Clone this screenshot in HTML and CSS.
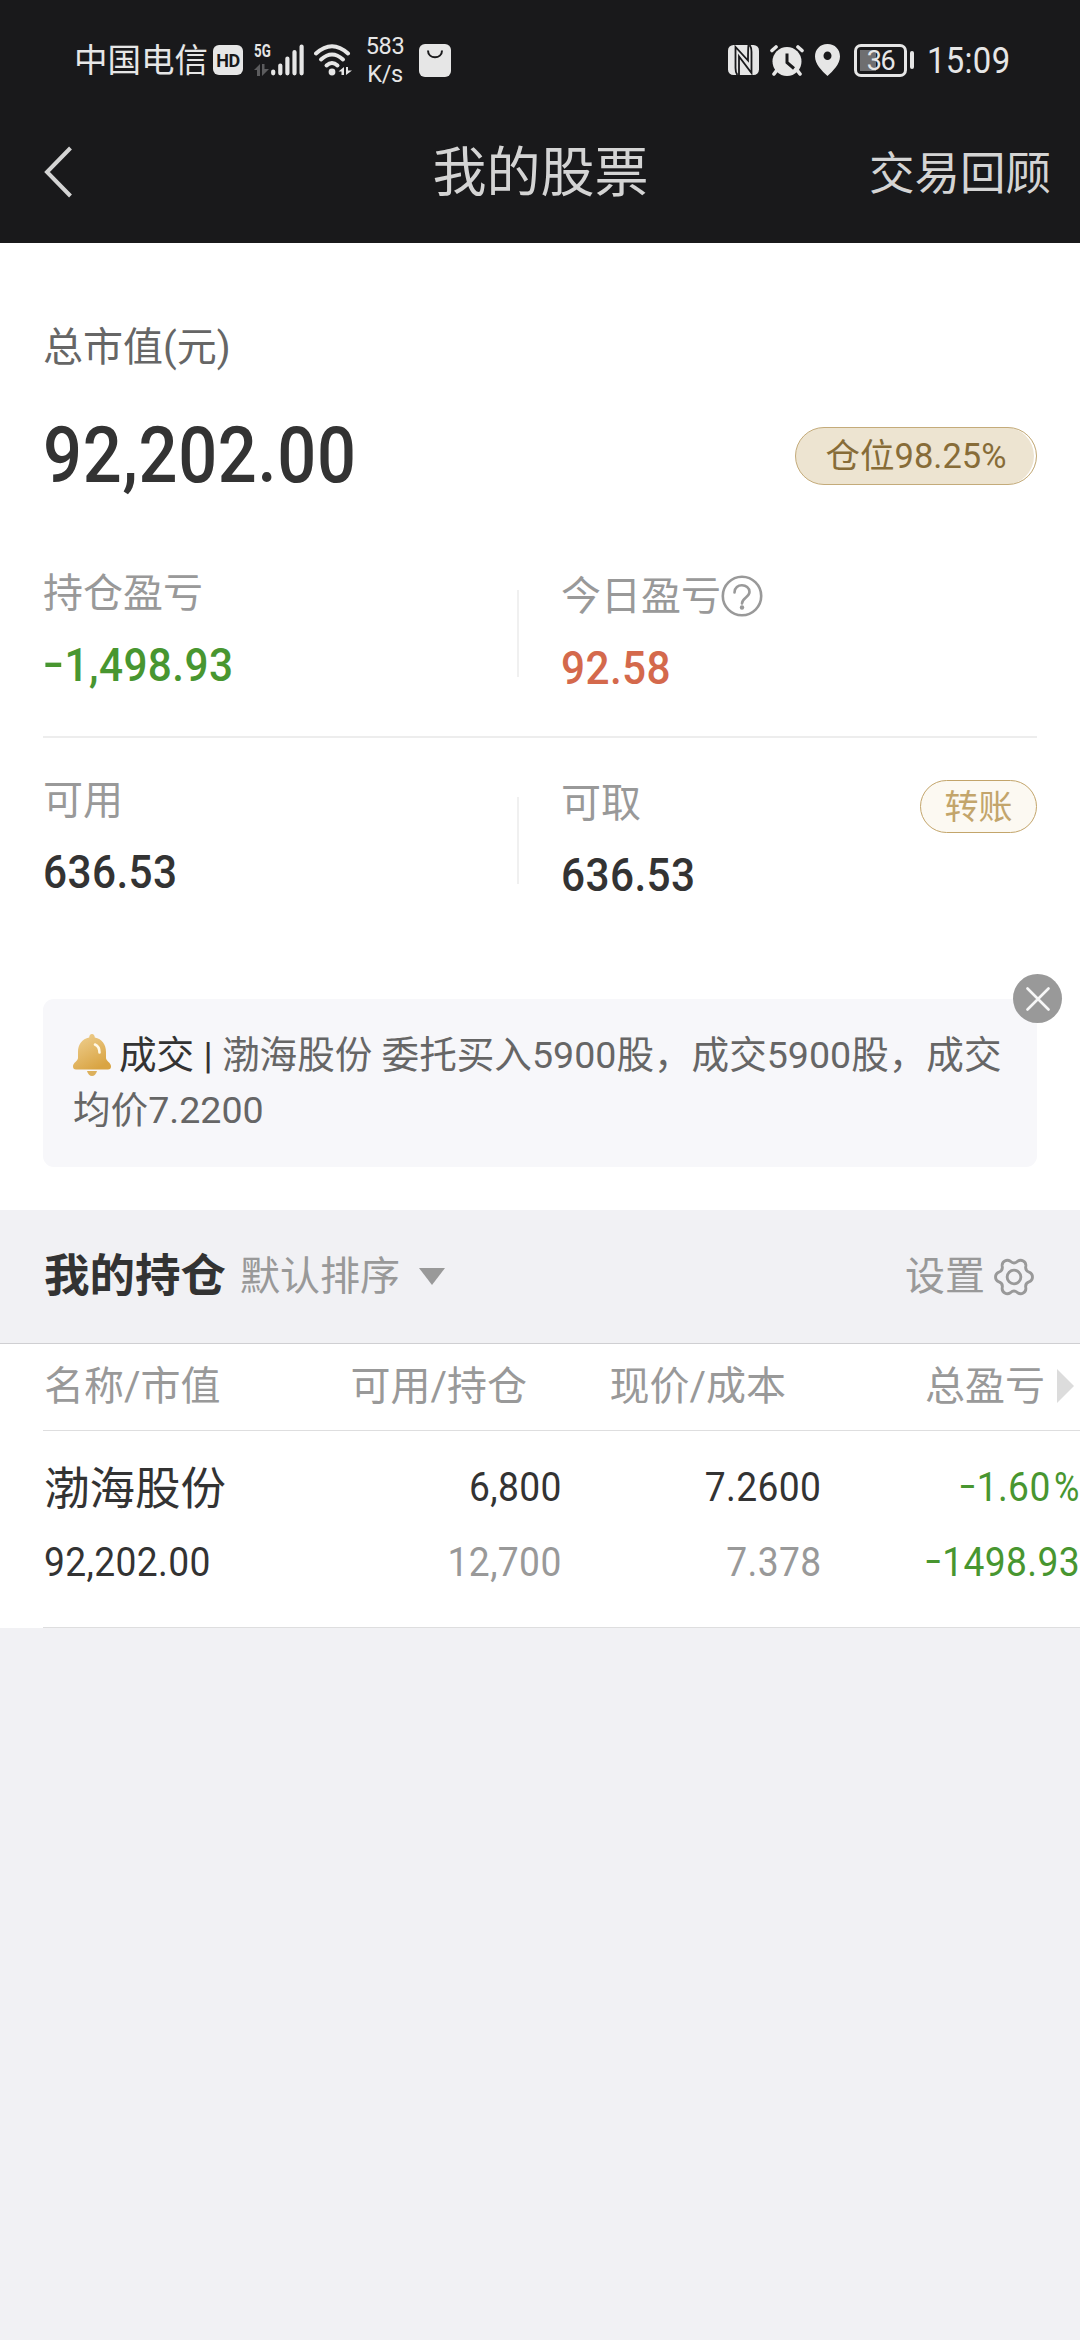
FILE: index.html
```html
<!DOCTYPE html>
<html lang="zh-CN">
<head>
    <meta charset="UTF-8">
    <meta name="viewport" content="width=device-width, initial-scale=1.0">
    <title>我的股票</title>
    <link rel="stylesheet" href="styles.css">
</head>
<body>
    <header class="header">
        <!-- Status bar -->
        <div class="status-bar">
            <div class="status-left">
                <span class="carrier">中国电信</span>
                <span class="hd">HD</span>
                <div class="network">
                    <span class="network-type">5G</span>
                    <svg width="15" height="12" viewBox="0 0 15 12" fill="#5c5c5e">
                        <path d="M6 0v12H3V6H0zM8 12V0h2.500v5H15z"/>
                    </svg>
                </div>
                <svg class="signal" width="33" height="32" viewBox="0 0 33 32" stroke="#e6e6e6" stroke-width="4.2" stroke-linecap="round">
                    <path d="M2.2 27.5v1.8M9.3 21.5v7.8M16.4 14.5v14.8M23.5 8v21.3M30.6 2.5v26.8"/>
                </svg>
                <svg class="wifi" width="38" height="32" viewBox="0 0 38 32">
                    <g fill="none" stroke="#e6e6e6" stroke-width="4" stroke-linecap="round">
                        <path d="M2 9.5Q18 -5 34 9.5"/>
                        <path d="M7 15.5Q18 5.5 29 15.5"/>
                        <path d="M12.5 21.5Q18 16.5 23.5 21.5"/>
                    </g>
                    <circle cx="18" cy="28" r="3.4" fill="#e6e6e6"/>
                    <path d="M30 23v8h-2.500v-3.500H24.500zM32 31v-8h2v3.500h4z" fill="#e6e6e6"/>
                </svg>
                <div class="speed">
                    <span>583</span>
                    <span>K/s</span>
                </div>
                <svg class="bag" width="32" height="33" viewBox="0 0 32 33">
                    <rect width="32" height="33" rx="6" fill="#e6e6e6"/>
                    <path d="M9 6.500c0 9 14 9 14 0" fill="none" stroke="#19191b" stroke-width="2"/>
                </svg>
            </div>
            <div class="status-right">
                <svg width="31" height="30" viewBox="0 0 31 30">
                    <rect width="31" height="30" rx="5.500" fill="#e6e6e6"/>
                    <path d="M9.500 30Q7.500 28 7.500 23V2L20 15.500Q20 3 20.500 0M11 30V11.500L23.500 28V7Q23.500 2 21.500 0" fill="none" stroke="#19191b" stroke-width="1.800"/>
                </svg>
                <svg width="34" height="31" viewBox="0 0 34 31">
                    <circle cx="17" cy="16.500" r="14.500" fill="#e6e6e6"/>
                    <path d="M2 5.500L6 2M32 5.500L28 2M7 25l-3 4M27 25l3 4" stroke="#e6e6e6" stroke-width="3.600" stroke-linecap="round"/>
                    <path d="M17 8.500v9l7 6" fill="none" stroke="#19191b" stroke-width="3"/>
                </svg>
                <svg width="25" height="32" viewBox="0 0 25 32">
                    <path d="M12.500 0C5 0 0 5.500 0 12.500 0 20 7 27 12.500 32 18 27 25 20 25 12.500 25 5.500 20 0 12.500 0zm0 7.500a4 4.300 0 1 1 0 8.600 4 4.300 0 0 1 0-8.600z" fill="#e6e6e6"/>
                </svg>
                <div class="battery">
                    <div class="battery-body"><span>36</span></div>
                    <div class="battery-cap"></div>
                </div>
                <div class="clock"><span class="num">15:09</span></div>
            </div>
        </div>
        <!-- Navigation -->
        <nav class="nav">
            <svg class="back" width="30" height="54" viewBox="0 0 30 54" fill="none" stroke="#d4d4d4" stroke-width="4">
                <path d="M27.500 3L4 27l23.500 24"/>
            </svg>
            <h1>我的股票</h1>
            <a class="review">交易回顾</a>
        </nav>
    </header>

    <!-- Account summary -->
    <section class="summary">
        <div class="total-label">总市值(元)</div>
        <div class="total-row">
            <span class="num total-value">92,202.00</span>
            <span class="position-badge">仓位98.25%</span>
        </div>

        <div class="stats-row">
            <div class="stat">
                <div class="stat-label">持仓盈亏</div>
                <div class="stat-value down"><span class="num"><span class="minus">-</span>1,498.93</span></div>
            </div>
            <div class="divider"></div>
            <div class="stat stat-second">
                <div class="stat-label">今日盈亏<svg width="42" height="42" viewBox="0 0 42 42" fill="none" stroke="#999" stroke-width="2.600">
                        <circle cx="21" cy="21" r="19.200"/>
                        <path d="M13.500 17.500c0-10 15-9 15-.500 0 5-7.500 6-7.500 11.500" stroke-linecap="round"/>
                        <circle cx="21" cy="32.500" r="2.200" fill="#999" stroke="none"/>
                    </svg></div>
                <div class="stat-value up"><span class="num">92.58</span></div>
            </div>
        </div>

        <div class="stats-row">
            <div class="stat">
                <div class="stat-label">可用</div>
                <div class="stat-value"><span class="num">636.53</span></div>
            </div>
            <div class="divider"></div>
            <div class="stat stat-second">
                <div class="stat-label">可取</div>
                <div class="stat-value"><span class="num">636.53</span></div>
            </div>
            <button class="transfer" type="button">转账</button>
        </div>

        <!-- Trade notice -->
        <div class="notice">
            <svg class="bell" width="38" height="42" viewBox="0 0 38 42">
                <defs>
                    <linearGradient id="bellFill" x1="0" y1="0" x2="0.6" y2="1">
                        <stop offset="0" stop-color="#f0d295"/>
                        <stop offset="1" stop-color="#d9a443"/>
                    </linearGradient>
                </defs>
                <path d="M14 37h10q-1.500 5-5 5t-5-5z" fill="#dcb05c"/>
                <path d="M19 0c1.800 0 2.600 1.500 2.800 3.500C29 5 33 10.500 33 18v6c0 3 5 4.500 5 8.500 0 2-1 3-3 3H3c-2 0-3-1-3-3C0 28.500 5 27 5 24v-6C5 10.500 9 5 16.200 3.500 16.400 1.500 17.200 0 19 0z" fill="url(#bellFill)"/>
                <path d="M22 10.500q4.500 2 4.500 8" fill="none" stroke="#fff8e6" stroke-width="2.600" stroke-linecap="round"/>
            </svg><span class="notice-tag">成交 |</span> 渤海股份 委托买入5900股，成交5900股，成交<br>均价7.2200
            <div class="close">
                <svg width="24" height="24" viewBox="0 0 24 24" stroke="#f7f7f7" stroke-width="2.600" stroke-linecap="round">
                    <path d="M1.500 1.500l21 21M22.500 1.500l-21 21"/>
                </svg>
            </div>
        </div>
    </section>

    <!-- Holdings -->
    <section class="holdings">
        <div class="holdings-bar">
            <h2>我的持仓</h2>
            <span class="sort">默认排序</span>
            <span class="caret-down"></span>
            <div class="settings">
                设置
                <svg width="40" height="40" viewBox="-21 -21 42 42" fill="none" stroke="#999" stroke-width="3">
                    <path d="M16.260-4.970A5.500 5.500 0 0 1 16.260 4.970Q11.260 6.500 12.430 11.590A5.500 5.500 0 0 1 3.820 16.560Q0 13-3.820 16.560A5.500 5.500 0 0 1-12.430 11.590Q-11.260 6.500-16.260 4.970A5.500 5.500 0 0 1-16.260-4.970Q-11.260-6.500-12.430-11.590A5.500 5.500 0 0 1-3.820-16.560Q0-13 3.820-16.560A5.500 5.500 0 0 1 12.430-11.590Q11.260-6.500 16.260-4.970z"/>
                    <circle r="7.200"/>
                </svg>
            </div>
        </div>

        <div class="table">
            <div class="table-row table-head">
                <div class="cell">名称/市值</div>
                <div class="cell">可用/持仓</div>
                <div class="cell">现价/成本</div>
                <div class="cell">总盈亏</div>
                <span class="caret-right"></span>
            </div>
            <div class="table-row table-item">
                <div class="cell">
                    <div class="stock-name">渤海股份</div>
                    <div><span class="num">92,202.00</span></div>
                </div>
                <div class="cell">
                    <div><span class="num">6,800</span></div>
                    <div class="muted"><span class="num">12,700</span></div>
                </div>
                <div class="cell">
                    <div><span class="num">7.2600</span></div>
                    <div class="muted"><span class="num">7.378</span></div>
                </div>
                <div class="cell down">
                    <div><span class="num"><span class="minus">-</span>1.60<span class="percent">%</span></span></div>
                    <div><span class="num"><span class="minus">-</span>1498.93</span></div>
                </div>
            </div>
        </div>
    </section>
</body>
</html>
```

FILE: styles.css
```css
:root {
    --header-bg: #19191b;
    --page-bg: #f1f1f4;
    --text-dark: #333;
    --text-mid: #666;
    --text-light: #999;
    --up-color: #d4694c;
    --down-color: #489630;
    --gold: #c3a56b;
}

* {
    margin: 0;
    padding: 0;
    box-sizing: border-box;
}

body {
    width: 1080px;
    min-height: 2340px;
    background: var(--page-bg);
    color: var(--text-dark);
    font-family: Roboto, "Noto Sans CJK SC", sans-serif;
    font-size: 40px;
    overflow-x: hidden;
}

svg {
    display: block;
    flex-shrink: 0;
}

/* Narrow DIN-like figures */
.num {
    display: inline-block;
    transform: scaleX(0.9);
    transform-origin: left center;
    letter-spacing: 0.01em;
}

.minus {
    display: inline-block;
    margin-right: 0.16em;
    transform: translateY(-0.04em) scaleX(1.45);
    transform-origin: left center;
}

.percent {
    display: inline-block;
    margin-left: 2px;
    transform: scaleX(0.93);
    transform-origin: right center;
}

/* Header */
.header {
    height: 243px;
    background: var(--header-bg);
    color: #e6e6e6;
}

.status-bar {
    display: flex;
    justify-content: space-between;
    height: 100px;
    padding: 20px 71px 0 74px;
}

.status-left, .status-right {
    display: flex;
    align-items: center;
}

.carrier {
    width: 139px;
    padding-top: 2px;
    font-size: 33.5px;
    line-height: 40px;
}

.hd {
    width: 30px;
    height: 30px;
    border-radius: 6px;
    background: #e6e6e6;
    color: var(--header-bg);
    font-size: 18px;
    font-weight: 700;
    line-height: 31px;
    text-align: center;
    letter-spacing: -0.5px;
}

.network {
    display: flex;
    flex-direction: column;
    justify-content: space-between;
    width: 17px;
    height: 32px;
    margin-left: 11px;
}

.network-type {
    font-size: 19px;
    font-weight: 700;
    line-height: 14px;
    transform: scaleX(0.7);
    transform-origin: left center;
}

.wifi {
    margin-left: 10px;
}

.speed {
    display: flex;
    flex-direction: column;
    width: 40px;
    margin-left: 13px;
    font-size: 23.5px;
    line-height: 28px;
    text-align: center;
    letter-spacing: -0.4px;
}

.bag {
    margin-left: 14px;
}

.status-right svg {
    margin-right: 11px;
}

.battery {
    display: flex;
    align-items: center;
    gap: 3px;
    margin-left: 3px;
}

.battery-body {
    width: 53px;
    height: 33px;
    border: 3px solid #e6e6e6;
    border-radius: 7px;
    background: linear-gradient(to right, #6e6e70 16px, transparent 16px) 3px 3px / 40px 21px no-repeat;
    font-size: 27px;
    line-height: 28px;
    text-align: center;
    letter-spacing: -1.5px;
}

.battery-cap {
    width: 4px;
    height: 18px;
    border-radius: 2px;
    background: #e6e6e6;
}

.clock {
    width: 82px;
    margin-left: 13px;
    padding-top: 1px;
    font-size: 36.5px;
    line-height: 40px;
    white-space: nowrap;
}

.nav {
    display: grid;
    grid-template-columns: 1fr auto 1fr;
    align-items: center;
    height: 143px;
    padding: 0 29px 0 43px;
    color: #d4d4d4;
}

.nav h1 {
    margin-left: -13px;
    padding-top: 5px;
    font-size: 54px;
    font-weight: 400;
    line-height: 80px;
}

.review {
    padding-top: 6px;
    font-size: 45.5px;
    line-height: 80px;
    text-align: right;
}

/* Account summary */
.summary {
    height: 967px;
    padding: 75px 43px 0;
    background: #fff;
}

.total-label {
    color: var(--text-mid);
    line-height: 60px;
}

.total-row {
    display: flex;
    align-items: center;
    justify-content: space-between;
    height: 80px;
    margin: 38px 0 69px;
}

.total-value {
    font-size: 78px;
    font-weight: 500;
    line-height: 82px;
    transform: scaleX(0.88);
}

.position-badge {
    width: 242px;
    height: 58px;
    border: 1px solid #c4ab7a;
    border-radius: 30px;
    background: #ede4d1;
    box-shadow: inset -3px 0 0 -1px #fff;
    color: #876c38;
    font-size: 34.5px;
    line-height: 57px;
    text-align: center;
}

.stats-row {
    display: flex;
    height: 173px;
    border-bottom: 2px solid #ededed;
}

.stats-row + .stats-row {
    height: 261px;
    padding-top: 34px;
    border-bottom: none;
}

.stat {
    width: 474px;
}

.stat-second {
    flex: 1;
    margin-left: 42px;
    padding-top: 3px;
}

.stat-label {
    display: flex;
    align-items: center;
    height: 56px;
    color: var(--text-light);
    line-height: 59px;
}

.stat-value {
    margin-top: 16px;
    font-size: 47px;
    font-weight: 500;
    line-height: 56px;
}

.divider {
    width: 2px;
    height: 87px;
    margin-top: 25px;
    background: #f0f0f0;
}

.up {
    color: var(--up-color);
}

.down {
    color: var(--down-color);
}

.transfer {
    width: 117px;
    height: 53px;
    margin-top: 8px;
    border: 1px solid var(--gold);
    border-radius: 27px;
    background: #fcf9f2;
    color: var(--gold);
    font-family: inherit;
    font-size: 34px;
    line-height: 50px;
}

/* Trade notice */
.notice {
    position: relative;
    height: 168px;
    padding: 29px 0 0 30px;
    border-radius: 11px;
    background: #f7f7fa;
    color: var(--text-mid);
    font-size: 37.6px;
    line-height: 54.5px;
    white-space: nowrap;
}

.bell {
    display: inline-block;
    margin-right: 8px;
    vertical-align: -8px;
}

.notice-tag {
    color: var(--text-dark);
}

.close {
    position: absolute;
    top: -25px;
    right: -25px;
    display: flex;
    align-items: center;
    justify-content: center;
    width: 49px;
    height: 49px;
    border-radius: 50%;
    background: var(--text-light);
}

/* Holdings */
.holdings-bar {
    display: flex;
    align-items: center;
    height: 134px;
    padding: 0 46px 0 44px;
    border-bottom: 1px solid #cfcfd2;
    color: var(--text-light);
    line-height: 60px;
}

.holdings-bar h2 {
    color: var(--text-dark);
    font-size: 45.5px;
    font-weight: 700;
}

.sort {
    margin-left: 14px;
}

.caret-down {
    margin-left: 19px;
    border: 13px solid transparent;
    border-top: 17px solid var(--text-light);
    border-bottom: none;
}

.settings {
    display: flex;
    align-items: center;
    gap: 9px;
    margin-left: auto;
}

.table {
    overflow: hidden;
    background: #fff;
}

.table-row {
    position: relative;
    display: grid;
    grid-template-columns: 301px 260px 259px 259px;
    width: 1079px;
    margin-left: 43px;
    border-bottom: 1px solid #dededf;
}

.cell {
    text-align: right;
    white-space: nowrap;
}

.cell:first-child {
    padding-left: 1px;
    text-align: left;
}

.table-head {
    height: 87px;
    color: var(--text-light);
    line-height: 85px;
}

.table-head .cell {
    padding-right: 77px;
}

.caret-right {
    position: absolute;
    top: 25px;
    left: 1014px;
    border: 17px solid transparent;
    border-left-color: #dcdcdc;
    border-right: none;
}

.table-item {
    height: 197px;
    padding-top: 19px;
    font-weight: 450;
    line-height: 75px;
}

.table-item .cell {
    padding-right: 42px;
}

.table-item .cell .num {
    transform: scaleX(0.93);
}

.table-item .cell + .cell .num {
    transform-origin: right center;
}

.stock-name {
    height: 75px;
    font-size: 45.5px;
    font-weight: 400;
    line-height: 79px;
}

.muted {
    color: var(--text-light);
}
```
